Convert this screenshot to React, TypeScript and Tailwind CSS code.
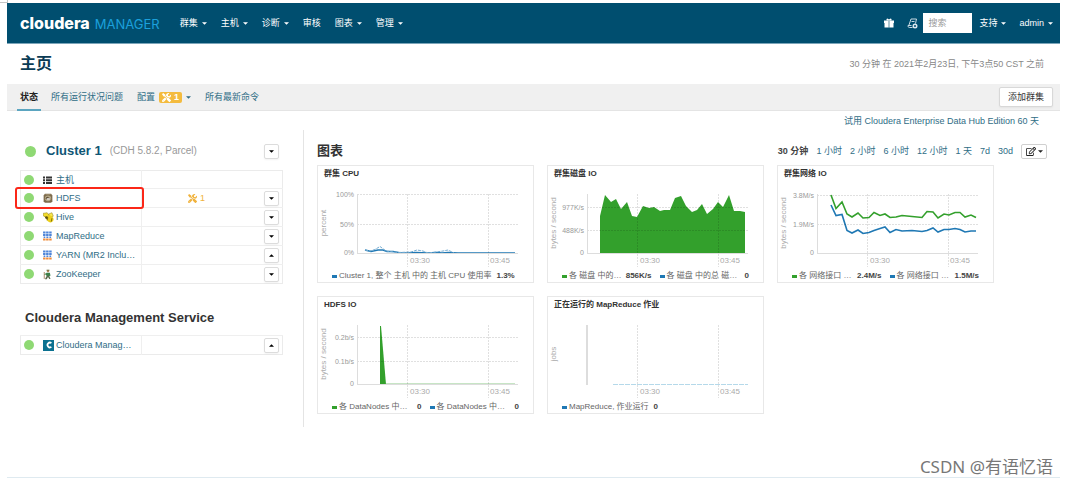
import React from "react";
import { FaRegEdit, FaTools } from "react-icons/fa";

const GREEN = "#33a02c";
const BLUE = "#1f78b4";

function Caret({ up = false }: { up?: boolean }) {
  return (
    <svg viewBox="0 0 6 3" className={up ? "h-[3px] w-[5px] rotate-180" : "h-[3px] w-[5px]"} aria-hidden="true">
      <path d="M0 0h6L3 3z" fill="currentColor" />
    </svg>
  );
}

function GiftGlyph() {
  return (
    <svg viewBox="0 0 20 20" className="h-[10px] w-[10px]" fill="#fff" aria-hidden="true">
      <path d="M0 5h9v14H1v-9H0zM11 5h9v5h-1v9h-8z" />
      <path d="M9 5h2v14H9z" fillOpacity=".75" />
      <path d="M5 5V2l2-1 3 2 3-2 2 1v3z" />
    </svg>
  );
}

function HostGlyph() {
  return (
    <svg viewBox="0 0 18 16" className="h-[8px] w-[9px]" fill="#333" aria-hidden="true">
      <path d="M0 1h4v4H0zM6 1h12v4H6zM0 6.500h4v4H0zM6 6.500h12v4H6zM0 12h4v4H0zM6 12h12v4H6z" />
    </svg>
  );
}

function HdfsGlyph() {
  return (
    <svg viewBox="0 0 16 16" className="h-[10px] w-[10px]" aria-hidden="true">
      <path d="M3 1h10l2 3v9l-2 2.500H3L1 13V4z" fill="#7d6b4d" />
      <ellipse cx="8" cy="8.500" rx="5" ry="4.500" fill="#b5a888" />
      <path d="M4 9c1-3 4-4 5-2l2 1 1 2H5z" fill="#5c4d36" />
      <path d="M6 8.500h5v2H6z" fill="#fff" />
      <path d="M4 2h8v1H4z" fill="#a99772" />
    </svg>
  );
}

function HiveGlyph() {
  return (
    <svg viewBox="0 0 16 16" className="h-[11px] w-[11px]" aria-hidden="true">
      <path d="M0 2l6-1 3 4-4 3-4-2z" fill="#f2dc2c" stroke="#8a7a14" strokeWidth=".7" />
      <path d="M8 3l5-2 2 5-4 2z" fill="#f7e64b" stroke="#8a7a14" strokeWidth=".7" />
      <ellipse cx="10" cy="10" rx="5.500" ry="4.500" fill="#ecd01c" transform="rotate(35 10 10)" />
      <path d="M7 8l-1 4M13 9l-1 5" stroke="#6b5f10" strokeWidth="1.200" />
      <circle cx="5" cy="8" r="2" fill="#5c520f" />
    </svg>
  );
}

function MapReduceGlyph() {
  return (
    <svg viewBox="0 0 16 18" className="h-[10px] w-[9px]" aria-hidden="true">
      <path d="M0 1h4.500v3.500H0zM5.500 1H10v3.500H5.500zM11 1h4.500v3.500H11zM0 5.500h4.500V9H0zM5.500 5.500H10V9H5.500zM11 5.500h4.500V9H11zM1 10h3v2.500H1zM6 10h3.500v2.500H6zM11.500 10h3v2.500h-3z" fill="#4f85d8" />
      <path d="M0 13.500h4.500V17H0zM5.500 13.500H10V17H5.500zM11 13.500h4.500V17H11z" fill="#ef8d3c" />
    </svg>
  );
}

function ZooKeeperGlyph() {
  return (
    <svg viewBox="0 0 16 16" className="h-[11px] w-[10px]" aria-hidden="true">
      <circle cx="8" cy="2.500" r="2" fill="#b98b60" />
      <path d="M5.500 1.500h5V.5h-5z" fill="#4c5b2a" />
      <path d="M6 5h5l1 5-2 .5H6L4 8z" fill="#3d8048" />
      <path d="M6 10h4l2 5h-2L8 12l-2 3.500H3z" fill="#5c6a4c" />
      <path d="M2 4v11" stroke="#96663c" strokeWidth="1.200" />
      <path d="M6 6L2.500 8" stroke="#3d8048" strokeWidth="1.500" />
    </svg>
  );
}

function ClouderaGlyph() {
  return (
    <span className="flex h-[11px] w-[11px] items-center justify-center bg-[#0b7190]" aria-hidden="true">
      <svg viewBox="0 0 10 10" className="h-[8px] w-[8px]">
        <path d="M8 2.600A3 3 0 1 0 8 7.400" fill="none" stroke="#fff" strokeWidth="2.200" />
      </svg>
    </span>
  );
}

function CommandsGlyph() {
  return (
    <svg viewBox="0 0 22 22" className="h-[11px] w-[11px]" fill="none" stroke="#dce8ee" strokeWidth="1.800" aria-hidden="true">
      <path d="M8 2h11l-2 9M8 2L4 14M2 15h7M2 15c0 3 1 4 3 4h6" />
      <path d="M9 7h6" />
      <circle cx="16" cy="16" r="3.500" strokeWidth="3" />
    </svg>
  );
}

function Tab({ children }: { children: React.ReactNode }) {
  return (
    <a href="#" className="flex h-full items-center gap-1 text-[#2f6d86]">
      {children}
    </a>
  );
}

type Service = { name: string; icon: React.ReactNode; issues?: number; menu?: "up" | "down"; marked?: boolean };

const services: Service[] = [
  { name: "主机", icon: <HostGlyph /> },
  { name: "HDFS", icon: <HdfsGlyph />, issues: 1, menu: "down", marked: true },
  { name: "Hive", icon: <HiveGlyph />, menu: "down" },
  { name: "MapReduce", icon: <MapReduceGlyph />, menu: "down" },
  { name: "YARN (MR2 Inclu…", icon: <MapReduceGlyph />, menu: "up" },
  { name: "ZooKeeper", icon: <ZooKeeperGlyph />, menu: "down" },
];

const management: Service[] = [{ name: "Cloudera Manag…", icon: <ClouderaGlyph />, menu: "up" }];

function MenuButton({ label, up }: { label: string; up?: boolean }) {
  return (
    <button
      type="button"
      aria-label={label}
      className="flex h-[15px] w-[15px] shrink-0 items-center justify-center rounded-[2px] border border-[#dcdcdc] bg-white text-black shadow-xs"
    >
      <Caret up={up} />
    </button>
  );
}

function ServiceTable({ label, rows }: { label: string; rows: Service[] }) {
  return (
    <table aria-label={label} className="w-full table-fixed border-collapse border border-[#ebebeb] text-[9px] leading-3">
      <colgroup>
        <col className="w-[121px]" />
        <col />
      </colgroup>
      <tbody>
        {rows.map((s) => (
          <tr key={s.name} className={s.menu ? "h-[19px] border-t border-[#efefef]" : "h-[18px]"}>
            <td className="relative border-r border-[#efefef] p-0">
              <div className="flex items-center pl-[3px]">
                <span className="h-[10px] w-[10px] rounded-full bg-[#8fd974]" />
                <span className="ml-[9px] flex w-[13px] items-center">{s.icon}</span>
                <a href="#" className="whitespace-nowrap text-[#2f6d86]">{s.name}</a>
              </div>
              {s.marked && (
                <span className="pointer-events-none absolute -inset-y-[2px] -right-[3px] -left-[6px] z-10 rounded-[3px] border-2 border-[#fb2718]" />
              )}
            </td>
            <td className="p-0">
              <div className="flex items-center justify-end pr-[3px]">
                {s.issues && (
                  <a href="#" className="mr-[59px] flex items-center gap-[3px] text-[#f0b23c]">
                    <FaTools className="h-[9px] w-[9px]" aria-hidden="true" />
                    {s.issues}
                  </a>
                )}
                {s.menu && <MenuButton label={s.name} up={s.menu === "up"} />}
              </div>
            </td>
          </tr>
        ))}
      </tbody>
    </table>
  );
}

type Tick = { y: number; label: string };
type Legend = { color: string; text: string; value: string };

function ChartCard({
  title,
  unit,
  ticks,
  legend,
  children,
}: {
  title: string;
  unit: string;
  ticks: Tick[];
  legend: Legend[];
  children: React.ReactNode;
}) {
  const hasScale = ticks.length > 0;
  return (
    <section className="flex h-[118px] flex-col border border-[#e8e8e8] text-[8px] leading-3">
      <h3 className="px-[6px] pt-[2px] font-bold text-[#333]">{title}</h3>
      <svg viewBox="0 15 215 90" className="h-[90px] w-full" role="img" aria-label={title}>
        {children}
        <g stroke="#000" strokeOpacity=".12" strokeDasharray="2 1" shapeRendering="crispEdges">
          <path d="M89.500 29V102M170.500 29V102" />
          {ticks.map((t) => (
            <path key={t.label} d={`M39 ${t.y + 0.5}H200`} />
          ))}
        </g>
        <path d="M39 29V89" stroke="#ddd" strokeWidth={hasScale ? 1 : 2} shapeRendering="crispEdges" />
        {hasScale && <path d="M39.500 88.500H200" stroke="#ddd" shapeRendering="crispEdges" />}
        <g fill="#999" fontSize="7" textAnchor="end">
          {ticks.map((t) => (
            <text key={t.label} x="36" y={t.y + 3}>{t.label}</text>
          ))}
          {hasScale && <text x="36" y="90">{unit === "percent" ? "0%" : "0"}</text>}
        </g>
        <g fill="#aaa" fontSize="8">
          <text x="92" y="98">03:30</text>
          <text x="172" y="98">03:45</text>
          <text x="8" y="58" textAnchor="middle" transform="rotate(-90 8 58)">{unit}</text>
        </g>
      </svg>
      <ul className={legend.length > 1 ? "grid grid-cols-2 gap-2 px-[14px] text-[#666]" : "px-[14px] text-[#666]"}>
        {legend.map((l) => (
          <li key={l.color} className="flex min-w-0 items-center gap-[2px] whitespace-nowrap">
            <span className={l.color === GREEN ? "h-[3px] w-[5px] shrink-0 bg-[#33a02c]" : "h-[3px] w-[5px] shrink-0 bg-[#1f78b4]"} />
            <span>{l.text}</span>
            <b className={legend.length > 1 ? "ml-auto text-[#444]" : "ml-[3px] text-[#444]"}>{l.value}</b>
          </li>
        ))}
      </ul>
    </section>
  );
}

function Charts() {
  return (
    <div className="grid grid-cols-[repeat(auto-fill,217px)] gap-[13px]">
      <ChartCard
        title="群集 CPU"
        unit="percent"
        ticks={[{ y: 29, label: "100%" }, { y: 59, label: "50%" }]}
        legend={[{ color: BLUE, text: "Cluster 1, 整个 主机 中的 主机 CPU 使用率", value: "1.3%" }]}
      >
        <polyline
          points="47,85 53,86.500 60,85 65,85 69,86.500 75,86.500 83,88 90,88 98,87.500 110,88 118,87.500 124,88 130,87.500 140,88 197,88"
          fill="none" stroke={BLUE} strokeWidth="1.600"
        />
        <polyline
          points="47,85 52,86 57,84.500 62,81.500 68,86 80,87.500 93,87 99,85 105,86 110,88 118,87 125,86 130,85 136,88"
          fill="none" stroke="#78aed3" strokeDasharray="3 1"
        />
      </ChartCard>
      <ChartCard
        title="群集磁盘 IO"
        unit="bytes / second"
        ticks={[{ y: 42, label: "977K/s" }, { y: 65, label: "488K/s" }]}
        legend={[
          { color: GREEN, text: "各 磁盘 中的…", value: "856K/s" },
          { color: BLUE, text: "各 磁盘 中的总 磁…", value: "0" },
        ]}
      >
        <polygon
          points="52,88.500 52,51 57,30 63,37 68,34 73,44 79,37 84,51 89,52 95,41 101,43 106,42 112,46 116,45 122,45 127,33 133,31 138,41 144,47 149,45 154,39 159,49 165,44 170,37 175,42 181,30 186,46 192,46 197,47 197,88.500"
          fill={GREEN}
        />
      </ChartCard>
      <ChartCard
        title="群集网络 IO"
        unit="bytes / second"
        ticks={[{ y: 30, label: "3.8M/s" }, { y: 59, label: "1.9M/s" }]}
        legend={[
          { color: GREEN, text: "各 网络接口 …", value: "2.4M/s" },
          { color: BLUE, text: "各 网络接口 …", value: "1.5M/s" },
        ]}
      >
        <g fill="none" strokeWidth="1.600">
          <polyline
            stroke={GREEN}
            points="53,30 58,43.500 64,37 69,49 74,52 80,48 85,53 91,52.500 96,47.500 102,50.500 107,49 112,52.500 118,52 124,50.500 134,51.500 144,52.500 149,46.500 155,47 160,53 166,49 171,50 177,47.500 182,47.500 187,52 193,50 198,52.500"
          />
          <polyline
            stroke={BLUE}
            points="53,40 58,50.500 64,49.500 69,65.500 74,68 80,65 85,68.500 91,67.500 96,65.500 102,63.500 107,62 112,67.500 118,64.500 124,66 134,65.500 144,66.500 149,65.500 155,63 160,67 166,64.500 171,64.500 177,63.500 182,64.500 187,67 193,66 198,66"
          />
        </g>
      </ChartCard>
      <ChartCard
        title="HDFS IO"
        unit="bytes / second"
        ticks={[{ y: 41, label: "0.2b/s" }, { y: 65, label: "0.1b/s" }]}
        legend={[
          { color: GREEN, text: "各 DataNodes 中…", value: "0" },
          { color: BLUE, text: "各 DataNodes 中…", value: "0" },
        ]}
      >
        <path d="M62 88.500V30H63L68 88.500z" fill={GREEN} />
        <path d="M68 88H197" stroke="#8fcb8b" />
      </ChartCard>
      <ChartCard
        title="正在运行的 MapReduce 作业"
        unit="jobs"
        ticks={[]}
        legend={[{ color: BLUE, text: "MapReduce, 作业运行", value: "0" }]}
      >
        <path d="M65 88.500H200" stroke="#b5d9ea" strokeDasharray="5 1" />
      </ChartCard>
    </div>
  );
}

const nav = ["群集", "主机", "诊断", "审核", "图表", "管理"];
const ranges = ["1 小时", "2 小时", "6 小时", "12 小时", "1 天", "7d", "30d"];

export default function App() {
  return (
    <div className="bg-white font-['Liberation_Sans','Noto_Sans_CJK_SC',sans-serif] text-[9px] leading-3 text-[#333]">
      <div className="h-[3px] w-2 border-r border-b border-[#c4c4c4]" />
      <div className="mr-2 ml-[7px]">
        <header className="flex h-[41px] items-center border-b border-[#7ba5b9] bg-[#004e6f] pr-[7px] pl-[13px] text-white">
          <a href="#" className="flex items-baseline gap-[5px] font-['Inter',sans-serif] leading-5">
            <span className="text-[16px] font-extrabold">cloudera</span>
            <span className="text-[13px] text-[#1ba0dc]">MANAGER</span>
          </a>
          <nav className="ml-5 flex items-center gap-[14px]">
            {nav.map((n) => (
              <a key={n} href="#" className="flex items-center gap-[4px] whitespace-nowrap">
                {n}
                {n !== "审核" && <Caret />}
              </a>
            ))}
          </nav>
          <div className="ml-auto flex items-center">
            <span className="mr-[13px]"><GiftGlyph /></span>
            <CommandsGlyph />
            <input
              type="search"
              aria-label="搜索"
              placeholder="搜索"
              className="ml-[5px] h-5 w-[49px] bg-white px-[5px] text-[9px] text-[#333] placeholder:text-[#999]"
            />
            <a href="#" className="ml-[7px] flex items-center gap-[4px]">支持 <Caret /></a>
            <a href="#" className="ml-[13px] flex items-center gap-[4px]">admin <Caret /></a>
          </div>
        </header>

        <div className="flex h-10 items-center justify-between pr-4 pl-[13px]">
          <h1 className="text-[16px] leading-6 font-bold text-[#0b3c55]">主页</h1>
          <p className="text-[#888]">30 分钟 在 2021年2月23日, 下午3点50 CST 之前</p>
        </div>

        <div className="flex h-[27px] items-center justify-between border-b border-[#e4e4e4] bg-[#f0f0f0] pr-[7px] pl-[10px]">
          <nav className="flex h-full items-center gap-[14px] whitespace-nowrap">
            <a href="#" className="flex h-[27px] items-center border-b-2 border-[#5ba5c0] px-[3px] pt-[2px] font-bold text-[#222]">状态</a>
            <div className="-ml-1 flex h-full">
              <Tab>所有运行状况问题</Tab>
            </div>
            <Tab>
              配置
              <span className="flex h-[11px] items-center gap-[3px] rounded-[2px] bg-[#f4bb3e] px-[3px] font-bold text-white">
                <FaTools className="h-[9px] w-[9px]" aria-hidden="true" />1
              </span>
              <Caret />
            </Tab>
            <Tab>所有最新命令</Tab>
          </nav>
          <button type="button" className="h-5 rounded-[2px] border border-[#d8d8d8] bg-white px-2 shadow-xs">添加群集</button>
        </div>

        <div className="flex h-[19px] items-center justify-end pr-[21px]">
          <a href="#" className="text-[#2f6d86]">试用 Cloudera Enterprise Data Hub Edition 60 天</a>
        </div>

        <main className="flex min-h-[297px]">
          <div className="w-[297px] shrink-0 border-r border-[#e4e4e4] pr-5 pl-[13px]">
            <div className="flex h-10 items-center pt-[2px] pr-[4px] pl-[5px]">
              <span className="h-[11px] w-[11px] rounded-full bg-[#8fd974]" />
              <h2 className="ml-[10px] text-[13px] leading-4 font-bold">
                <a href="#" className="text-[#0f5675]">Cluster 1</a>
              </h2>
              <span className="ml-2 text-[10px] text-[#999]">(CDH 5.8.2, Parcel)</span>
              <span className="ml-auto"><MenuButton label="Cluster 1" /></span>
            </div>
            <ServiceTable label="Cluster 1" rows={services} />
            <h2 className="mt-6 mb-[7px] ml-[5px] text-[13px] leading-5 font-bold">Cloudera Management Service</h2>
            <ServiceTable label="Cloudera Management Service" rows={management} />
          </div>

          <div className="min-w-0 flex-1 pl-[13px]">
            <div className="flex h-[35px] items-center justify-between pt-[7px] pr-[13px]">
              <h2 className="text-[13px] leading-4 font-bold">图表</h2>
              <div className="flex items-center gap-2 whitespace-nowrap text-[#2f6d86]">
                <b className="text-[#444]">30 分钟</b>
                {ranges.map((r) => (
                  <a key={r} href="#">{r}</a>
                ))}
                <button
                  type="button"
                  aria-label="编辑"
                  className="flex h-[15px] w-[26px] items-center justify-center gap-[2px] rounded-[2px] border border-[#d0d0d0] bg-white text-[#222]"
                >
                  <FaRegEdit className="h-[9px] w-[10px]" aria-hidden="true" />
                  <Caret />
                </button>
              </div>
            </div>
            <Charts />
          </div>
        </main>

        <footer className="mt-[27px] flex h-6 items-center justify-end border-b border-[#dfeaf0] pt-[3px] pr-[7px]">
          <p className="font-['Noto_Sans','Noto_Sans_CJK_SC',sans-serif] text-[17px] leading-5 text-[#777]">CSDN @有语忆语</p>
        </footer>
      </div>
    </div>
  );
}
